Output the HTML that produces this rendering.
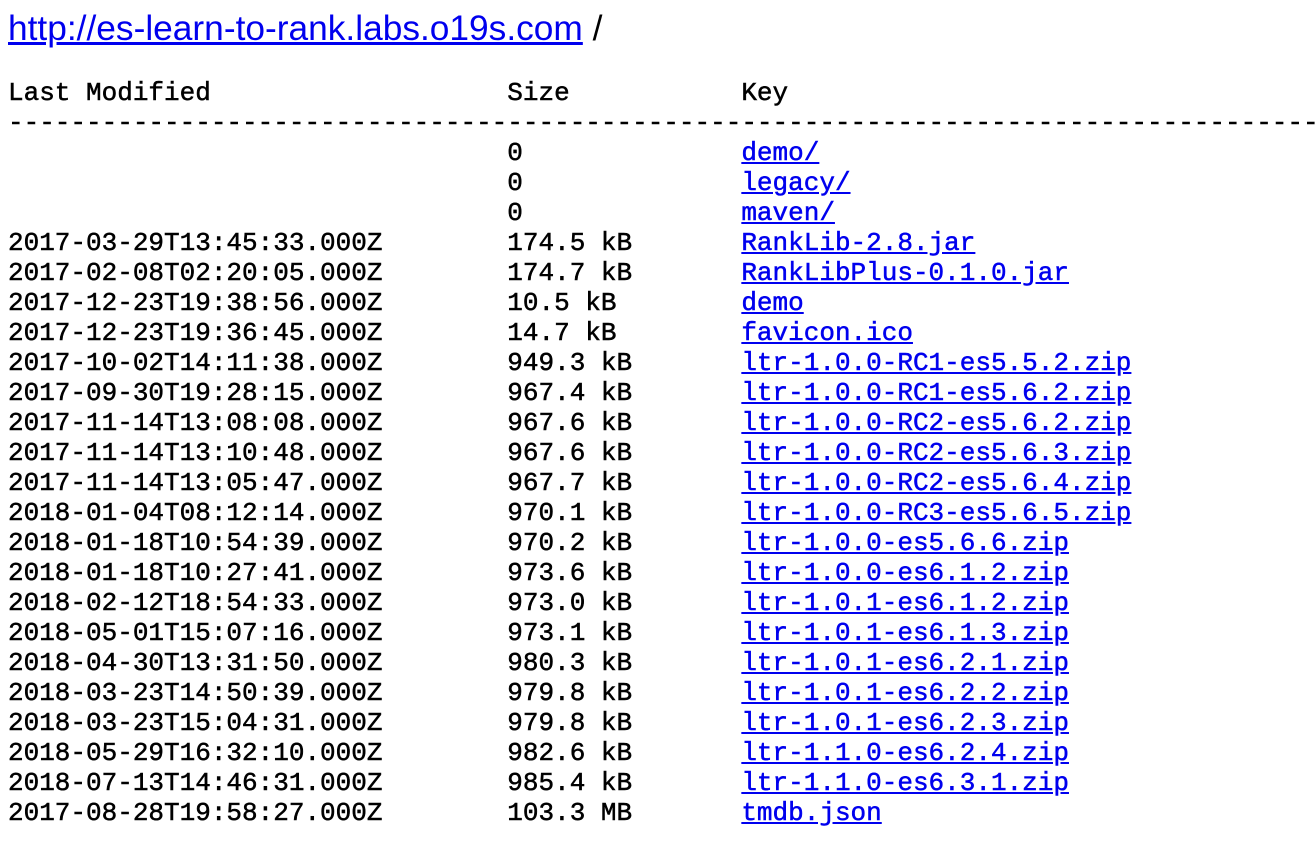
<!DOCTYPE html>
<html><head><meta charset="utf-8"><style>
html,body{margin:0;padding:0;background:#fff;overflow:hidden;width:1316px;height:860px;position:relative}
.t{position:absolute;left:8px;top:9px;font-family:"Liberation Sans",Arial,sans-serif;font-size:35.3px;line-height:40px;white-space:nowrap;color:#000}
a{color:#0000ee}
.w{position:absolute;left:0;top:0;width:1316px;height:860px;overflow:hidden}
pre{position:absolute;left:8px;top:78px;margin:0;font-family:"Liberation Mono","Courier New",monospace;font-size:26px;line-height:30px;color:#000;white-space:pre;-webkit-text-stroke:0.5px}
</style></head><body><div class="w">
<div class="t"><a href="#">http://es-learn-to-rank.labs.o19s.com</a> /</div>
<pre>Last Modified                   Size           Key
------------------------------------------------------------------------------------------
                                0              <a href="#">demo/</a>
                                0              <a href="#">legacy/</a>
                                0              <a href="#">maven/</a>
2017-03-29T13:45:33.000Z        174.5 kB       <a href="#">RankLib-2.8.jar</a>
2017-02-08T02:20:05.000Z        174.7 kB       <a href="#">RankLibPlus-0.1.0.jar</a>
2017-12-23T19:38:56.000Z        10.5 kB        <a href="#">demo</a>
2017-12-23T19:36:45.000Z        14.7 kB        <a href="#">favicon.ico</a>
2017-10-02T14:11:38.000Z        949.3 kB       <a href="#">ltr-1.0.0-RC1-es5.5.2.zip</a>
2017-09-30T19:28:15.000Z        967.4 kB       <a href="#">ltr-1.0.0-RC1-es5.6.2.zip</a>
2017-11-14T13:08:08.000Z        967.6 kB       <a href="#">ltr-1.0.0-RC2-es5.6.2.zip</a>
2017-11-14T13:10:48.000Z        967.6 kB       <a href="#">ltr-1.0.0-RC2-es5.6.3.zip</a>
2017-11-14T13:05:47.000Z        967.7 kB       <a href="#">ltr-1.0.0-RC2-es5.6.4.zip</a>
2018-01-04T08:12:14.000Z        970.1 kB       <a href="#">ltr-1.0.0-RC3-es5.6.5.zip</a>
2018-01-18T10:54:39.000Z        970.2 kB       <a href="#">ltr-1.0.0-es5.6.6.zip</a>
2018-01-18T10:27:41.000Z        973.6 kB       <a href="#">ltr-1.0.0-es6.1.2.zip</a>
2018-02-12T18:54:33.000Z        973.0 kB       <a href="#">ltr-1.0.1-es6.1.2.zip</a>
2018-05-01T15:07:16.000Z        973.1 kB       <a href="#">ltr-1.0.1-es6.1.3.zip</a>
2018-04-30T13:31:50.000Z        980.3 kB       <a href="#">ltr-1.0.1-es6.2.1.zip</a>
2018-03-23T14:50:39.000Z        979.8 kB       <a href="#">ltr-1.0.1-es6.2.2.zip</a>
2018-03-23T15:04:31.000Z        979.8 kB       <a href="#">ltr-1.0.1-es6.2.3.zip</a>
2018-05-29T16:32:10.000Z        982.6 kB       <a href="#">ltr-1.1.0-es6.2.4.zip</a>
2018-07-13T14:46:31.000Z        985.4 kB       <a href="#">ltr-1.1.0-es6.3.1.zip</a>
2017-08-28T19:58:27.000Z        103.3 MB       <a href="#">tmdb.json</a>
</pre>
</div></body></html>
